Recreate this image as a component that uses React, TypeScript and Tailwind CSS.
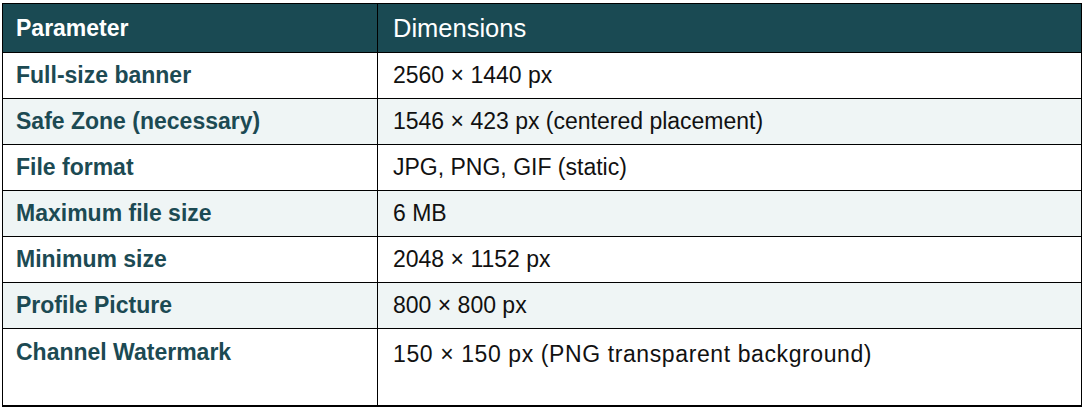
const ROWS: { param: string; value: string }[] = [
  { param: "Full-size banner", value: "2560 × 1440 px" },
  { param: "Safe Zone (necessary)", value: "1546 × 423 px (centered placement)" },
  { param: "File format", value: "JPG, PNG, GIF (static)" },
  { param: "Maximum file size", value: "6 MB" },
  { param: "Minimum size", value: "2048 × 1152 px" },
  { param: "Profile Picture", value: "800 × 800 px" },
];

export default function App() {
  return (
    <div className="h-[409px] w-[1085px] bg-white pl-[2px] pt-[3px] font-['Liberation_Sans',Arial,sans-serif]">
      <div className="w-[1080px] border border-b-2 border-black">
        {/* header */}
        <div className="flex h-[48px] bg-[#1a4a53] text-white">
          <div className="flex w-[375px] items-center border-r border-black pl-[13px] text-[23px] font-bold">
            Parameter
          </div>
          <div className="flex flex-1 items-center pl-[15px] text-[25.5px]">Dimensions</div>
        </div>

        {ROWS.map((r, i) => (
          <div
            key={r.param}
            className={`flex h-[46px] border-t border-black ${i % 2 === 1 ? "bg-[#eff5f5]" : "bg-white"}`}
          >
            <div className="flex w-[375px] items-center border-r border-black pl-[13px] text-[23px] font-bold text-[#1c4a53]">
              {r.param}
            </div>
            <div className="flex flex-1 items-center pl-[15px] text-[23px] text-[#111]">{r.value}</div>
          </div>
        ))}

        {/* last row is taller, text sits at the top */}
        <div className="flex h-[77px] border-t border-black bg-white">
          <div className="w-[375px] border-r border-black pl-[13px] pt-[10px] text-[23px] leading-[26px] font-bold text-[#1c4a53]">
            Channel Watermark
          </div>
          <div className="flex-1 pl-[15px] pt-[12px] text-[23px] leading-[26px] tracking-[0.6px] text-[#111]">
            150 × 150 px (PNG transparent background)
          </div>
        </div>
      </div>
    </div>
  );
}
